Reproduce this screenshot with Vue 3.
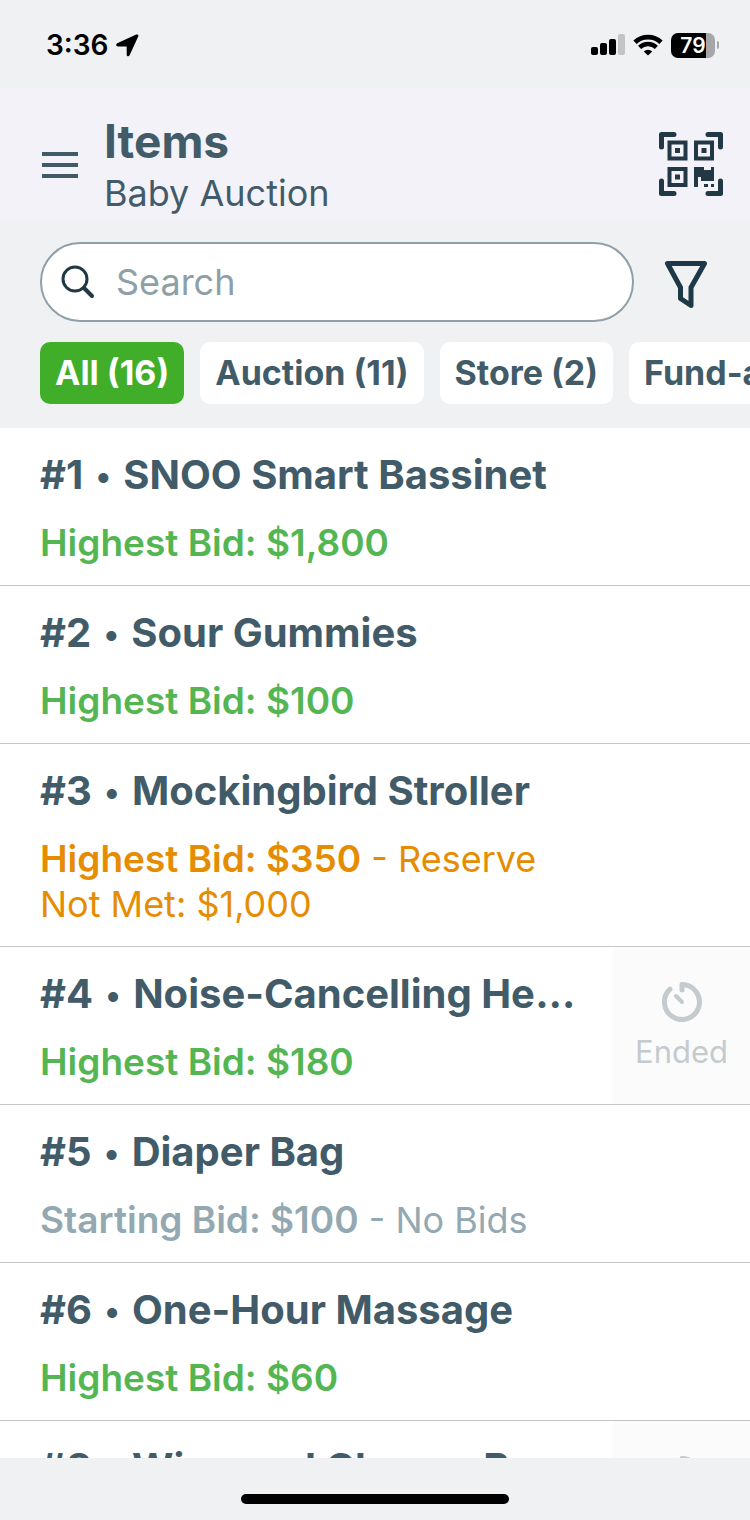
<script setup>
import { ref } from 'vue'

const query = ref('')
const activeFilter = ref('All')

const filters = [
  { name: 'All', count: 16 },
  { name: 'Auction', count: 11 },
  { name: 'Store', count: 2 },
  { name: 'Fund-a-Need', count: 3 },
]

const items = [
  { number: 1, title: 'SNOO Smart Bassinet', label: 'Highest Bid: $1,800', note: '', state: 'met', ended: false },
  { number: 2, title: 'Sour Gummies', label: 'Highest Bid: $100', note: '', state: 'met', ended: false },
  { number: 3, title: 'Mockingbird Stroller', label: 'Highest Bid: $350', note: ' - Reserve Not Met: $1,000', state: 'reserve', ended: false },
  { number: 4, title: 'Noise-Cancelling Headphones', label: 'Highest Bid: $180', note: '', state: 'met', ended: true },
  { number: 5, title: 'Diaper Bag', label: 'Starting Bid: $100', note: ' - No Bids', state: 'none', ended: false },
  { number: 6, title: 'One-Hour Massage', label: 'Highest Bid: $60', note: '', state: 'met', ended: false },
  { number: 8, title: 'Wine and Cheese Basket', label: 'Highest Bid: $90', note: '', state: 'met', ended: true },
]
</script>

<template>
  <div class="screen">
    <div class="status">
      <div class="status-left">
        <span class="time">3:36</span>
        <svg width="23" height="23" viewBox="0 0 23 23" aria-hidden="true">
          <path d="M1.2 9.200 20.200.6c1.500-.6 2.700.6 2 2L13.600 21.300c-.7 1.600-2.900 1.200-2.900-.6V12.500H2.200C-.1 12.500-.4 10 1.200 9.200z" />
        </svg>
      </div>
      <div class="status-right">
        <svg width="34" height="22" viewBox="0 0 34 22" aria-hidden="true">
          <rect x="0" y="13" width="7" height="8" rx="2" />
          <rect x="9" y="9" width="7" height="12" rx="2" />
          <rect x="18" y="5" width="7" height="16" rx="2" />
          <rect x="27" y="0" width="7" height="21" rx="2" fill="#c3c4c6" />
        </svg>
        <svg width="30" height="22" viewBox="0 0 30 22" aria-hidden="true">
          <path d="M2 8.200a19 19 0 0 1 26 0" fill="none" stroke="#000" stroke-width="4.800" />
          <path d="M6.600 13.300a12.300 12.300 0 0 1 16.800 0" fill="none" stroke="#000" stroke-width="4.400" />
          <path d="M15 21.500 10.800 17.400a6 6 0 0 1 8.400 0z" />
        </svg>
        <div class="battery">
          <span class="battery-body">79</span>
          <span class="battery-tip"></span>
        </div>
      </div>
    </div>

    <header class="header">
      <button class="icon-button" type="button" aria-label="Menu">
        <svg width="36" height="26" viewBox="0 0 36 26">
          <path d="M0 2h36M0 13h36M0 24h36" stroke="#425b68" stroke-width="4" />
        </svg>
      </button>
      <div class="heading">
        <h1>Items</h1>
        <p>Baby Auction</p>
      </div>
      <button class="icon-button" type="button" aria-label="Scan code">
        <svg width="64" height="66" viewBox="0 0 64 66">
          <g fill="none" stroke="#223844">
            <path d="M15 2.500H2.500V15M49 2.500h12.500V15M15 61.500H2.500V49M49 61.500h12.500V49" stroke-width="5" stroke-linecap="round" stroke-linejoin="round" />
            <path d="M10.500 10.500h16v16h-16zM37 10.500h16v16H37zM10.500 37h16v16h-16z" stroke-width="4" />
          </g>
          <path d="M16 16h5v5h-5zM42.500 16h5v5h-5zM16 42.500h5v5h-5zM35 35h10v3h7v-3h3v14H42v-4h-3v10h-4zM45 52h4v3h-4zM52 52h3v3h-3z" fill="#223844" />
        </svg>
      </button>
    </header>

    <div class="tools">
      <div class="search-row">
        <label class="search">
          <svg width="34" height="34" viewBox="0 0 34 34" fill="none" stroke="#223844" stroke-linecap="round" aria-hidden="true">
            <circle cx="14" cy="14" r="12" stroke-width="3" />
            <path d="m23 23 8 8" stroke-width="4" />
          </svg>
          <input v-model="query" type="text" placeholder="Search" aria-label="Search" />
        </label>
        <button class="icon-button" type="button" aria-label="Filter">
          <svg width="44" height="54" viewBox="0 0 44 54">
            <path d="M3.500 8.500h37L27 32.500v18l-10.500-7v-11z" fill="none" stroke="#1d3846" stroke-width="5" stroke-linejoin="round" />
          </svg>
        </button>
      </div>
      <nav class="chips" aria-label="Item types">
        <button
          v-for="f in filters"
          :key="f.name"
          type="button"
          class="chip"
          :class="{ active: f.name === activeFilter }"
          @click="activeFilter = f.name"
        >{{ f.name }} ({{ f.count }})</button>
      </nav>
    </div>

    <ul class="list">
      <li v-for="item in items" :key="item.number" class="item">
        <div class="details">
          <h2>#{{ item.number }} <span class="dot">•</span> {{ item.title }}</h2>
          <p :class="item.state"><strong>{{ item.label }}</strong>{{ item.note }}</p>
        </div>
        <div v-if="item.ended" class="ended">
          <svg width="40" height="40" viewBox="0 0 40 40" fill="none" stroke="#c4cbcf" aria-hidden="true">
            <path d="M20 8V2.500A17.500 17.500 0 1 1 8 7.200" stroke-width="5" stroke-linecap="round" stroke-linejoin="round" />
            <path d="m14 14 6 6" stroke-width="4" stroke-linecap="round" />
          </svg>
          <span>Ended</span>
        </div>
      </li>
    </ul>

    <footer class="footer"><span class="home-bar"></span></footer>
  </div>
</template>

<style>
body {
  margin: 0;
}
</style>

<style scoped>
.screen {
  display: flex;
  flex-direction: column;
  height: 100vh;
  overflow: hidden;
  background: #f0f1f3;
  color: #425b68;
  font-family: Inter, "Liberation Sans", sans-serif;
}

h1,
h2,
p,
ul {
  margin: 0;
  padding: 0;
}

svg {
  display: block;
  flex: none;
}

.status {
  display: flex;
  flex: none;
  align-items: center;
  justify-content: space-between;
  height: 88px;
  box-sizing: border-box;
  padding: 2px 31px 0 46px;
  color: #000;
}

.status-left,
.status-right,
.battery {
  display: flex;
  align-items: center;
}

.status-left {
  gap: 8px;
}

.time {
  font-size: 28px;
  font-weight: 600;
  line-height: 36px;
}

.status-right {
  gap: 8px;
}

.battery {
  gap: 2px;
}

.battery-body {
  width: 44px;
  border-radius: 7px;
  background: linear-gradient(to right, #000 79%, #a6a6a8 79%);
  color: #fff;
  font-size: 21px;
  font-weight: 600;
  line-height: 25px;
  text-align: center;
}

.battery-tip {
  width: 2px;
  height: 8px;
  border-radius: 0 2px 2px 0;
  background: #a6a6a8;
}

.header {
  display: flex;
  flex: none;
  align-items: center;
  gap: 26px;
  box-sizing: border-box;
  min-height: 133px;
  padding: 20px 27px 0 42px;
  background: #f3f2f9;
}

.heading {
  flex: 1;
  min-width: 0;
}

h1 {
  font-size: 46px;
  font-weight: 700;
  line-height: 56px;
}

.heading p {
  font-size: 36px;
  line-height: 48px;
}

.icon-button {
  flex: none;
  padding: 0;
  border: 0;
  background: none;
  cursor: pointer;
}

.tools {
  flex: none;
  padding: 21px 0 24px 40px;
}

.search-row {
  display: flex;
  align-items: center;
  gap: 30px;
  padding-right: 42px;
}

.search {
  display: flex;
  flex: 1;
  align-items: center;
  gap: 21px;
  min-width: 0;
  height: 80px;
  box-sizing: border-box;
  padding: 0 19px;
  border: 2px solid #8e9fa7;
  border-radius: 40px;
  background: #fff;
}

.search input {
  flex: 1;
  min-width: 0;
  padding: 0;
  border: 0;
  outline: 0;
  background: none;
  color: #425b68;
  font-family: inherit;
  font-size: 36px;
  line-height: 48px;
}

.search input::placeholder {
  color: #8e9fa7;
  opacity: 1;
}

.chips {
  display: flex;
  gap: 16px;
  margin-top: 20px;
  overflow: hidden;
}

.chip {
  flex: none;
  padding: 0 15px;
  border: 0;
  border-radius: 10px;
  background: #fff;
  color: #425b68;
  font-family: inherit;
  font-size: 34px;
  font-weight: 700;
  line-height: 62px;
  white-space: nowrap;
  cursor: pointer;
}

.chip.active {
  background: #40ae29;
  color: #fff;
}

.list {
  flex: 1;
  min-height: 0;
  overflow: hidden;
  background: #fff;
  list-style: none;
}

.item {
  display: grid;
  grid-template-columns: minmax(0, 1fr) 137px;
  border-bottom: 1px solid #c5c6c7;
}

.details {
  padding: 22px 36px 19px 40px;
}

h2 {
  overflow: hidden;
  font-size: 40px;
  font-weight: 700;
  line-height: 50px;
  text-overflow: ellipsis;
  white-space: nowrap;
}

.dot {
  margin: 0 3px;
  font-size: 32px;
  line-height: 32px;
  vertical-align: 2px;
}

.details p {
  margin-top: 21px;
  font-size: 36px;
  line-height: 45px;
}

.details strong {
  font-size: 37px;
  font-weight: 600;
  line-height: 40px;
}

.met {
  color: #54b653;
}

.reserve {
  color: #e68c00;
}

.none {
  color: #93a8b1;
}

.ended {
  display: flex;
  flex-direction: column;
  align-items: center;
  justify-content: center;
  gap: 10px;
  padding-top: 2px;
  background: #fbfbfb;
  color: #c4cbcf;
  font-size: 31px;
  line-height: 40px;
}

.footer {
  display: flex;
  flex: none;
  align-items: flex-end;
  justify-content: center;
  height: 62px;
  box-sizing: border-box;
  padding-bottom: 16px;
}

.home-bar {
  width: 268px;
  height: 10px;
  border-radius: 5px;
  background: #000;
}
</style>
